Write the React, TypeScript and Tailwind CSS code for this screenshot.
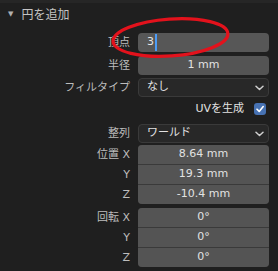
import React from 'react';

const font = { fontFamily: '"DejaVu Sans", "Noto Sans CJK JP", sans-serif' };

const Label: React.FC<{ text: string }> = ({ text }) => (
  <div className="w-[138px] shrink-0 pr-2 text-right text-[11px] text-[#bdbdbd] leading-none">{text}</div>
);

const Chevron = () => (
  <svg width="9" height="6" viewBox="0 0 9 6" className="text-[#cfcfcf]">
    <path d="M1 1.2 L4.5 4.5 L8 1.2" fill="none" stroke="currentColor" strokeWidth="1.5" strokeLinecap="round" strokeLinejoin="round" />
  </svg>
);

const NumField: React.FC<{ value: string }> = ({ value }) => (
  <div className="flex h-[19px] w-[131px] items-center justify-center rounded-[4px] bg-[#545454] text-[11px] text-[#e2e2e2]">
    {value}
  </div>
);

const Select: React.FC<{ value: string }> = ({ value }) => (
  <div className="flex h-[19px] w-[131px] items-center justify-between rounded-[4px] border border-[#3a3a3a] bg-[#282828] pl-2 pr-[4px] text-[11px] text-[#e2e2e2]">
    <span>{value}</span>
    <Chevron />
  </div>
);

const Group: React.FC<{ title: string; values: string[] }> = ({ title, values }) => (
  <div className="flex">
    <div className="flex flex-col">
      {values.map((_, i) => (
        <div key={i} className={`flex h-[19px] items-center ${i > 0 ? 'mt-px' : ''}`}>
          <Label text={i === 0 ? `${title} X` : i === 1 ? 'Y' : 'Z'} />
        </div>
      ))}
    </div>
    <div className="flex w-[131px] flex-col gap-px overflow-hidden rounded-[4px] bg-[#3a3a3a]">
      {values.map((v, i) => (
        <div key={i} className="flex h-[19px] items-center justify-center bg-[#545454] text-[11px] text-[#e2e2e2]">
          {v}
        </div>
      ))}
    </div>
  </div>
);

const App: React.FC = () => {
  return (
    <div className="relative h-[271px] w-[278px] overflow-hidden bg-[#1f1f1f]" style={font}>
      <div className="h-[3px] bg-[#262626]" />
      <div className="flex h-[23px] items-center pl-[8px] text-[12px] text-[#c4c4c4]">
        <span className="mr-[8px] text-[7px] text-[#b0b0b0]">▼</span>
        <span>円を追加</span>
      </div>
      <div className="mt-[7px] flex flex-col">
        <div className="flex h-[19px] items-center">
          <Label text="頂点" />
          <div className="flex h-[19px] w-[131px] items-center rounded-[4px] bg-[#575757] pl-[9px] text-[11px] text-[#e6e6e6]">
            <span>3</span>
            <span className="ml-px h-[17px] w-[2px] bg-[#4d9cf5]" />
          </div>
        </div>
        <div className="mt-[4px] flex h-[19px] items-center">
          <Label text="半径" />
          <NumField value="1 mm" />
        </div>
        <div className="mt-[3px] flex h-[19px] items-center">
          <Label text="フィルタイプ" />
          <Select value="なし" />
        </div>
        <div className="mt-[2px] flex h-[20px] items-center justify-end pr-[12px]">
          <span className="mr-[10px] text-[11px] text-[#e2e2e2]">UVを生成</span>
          <div className="flex h-[12px] w-[12px] items-center justify-center rounded-[3px] bg-[#4772b3]">
            <svg width="10" height="10" viewBox="0 0 10 10">
              <path d="M2 5.2 L4.2 7.4 L8.2 2.6" fill="none" stroke="#ffffff" strokeWidth="1.6" strokeLinecap="round" strokeLinejoin="round" />
            </svg>
          </div>
        </div>
        <div className="mt-[5px] flex h-[19px] items-center">
          <Label text="整列" />
          <Select value="ワールド" />
        </div>
        <div className="mt-[2px]">
          <Group title="位置" values={['8.64 mm', '19.3 mm', '-10.4 mm']} />
        </div>
        <div className="mt-[4px]">
          <Group title="回転" values={['0°', '0°', '0°']} />
        </div>
      </div>
      <svg className="pointer-events-none absolute left-0 top-0" width="278" height="271" viewBox="0 0 278 271">
        <ellipse cx="170.5" cy="37.5" rx="57.5" ry="18.5" fill="none" stroke="#e3121c" strokeWidth="3.2" transform="rotate(-4 170.5 37.5)" />
      </svg>
    </div>
  );
};

export default App;
